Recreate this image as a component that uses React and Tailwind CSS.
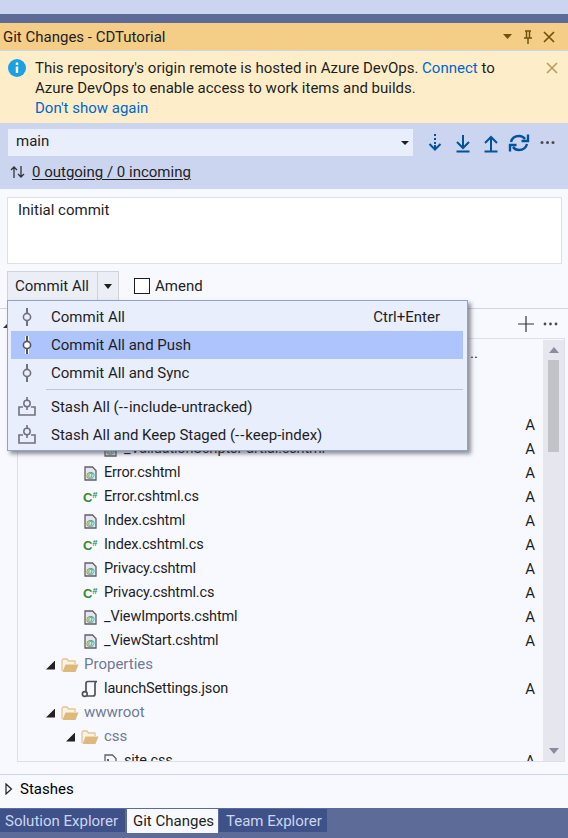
const blue = '#00539c';

function CommitIcon({ active }) {
  return (
    <svg width="16" height="20" viewBox="0 0 16 20" className="shrink-0">
      {active && <path d="M8 1v18" stroke="#fff" strokeWidth="4" />}
      <path d="M8 1v5M8 14v5" stroke={active ? '#55555f' : '#71717c'} strokeWidth="2" />
      <circle cx="8" cy="10" r="3.6" fill={active ? '#fff' : 'none'} stroke={active ? '#55555f' : '#71717c'} strokeWidth="1.6" />
    </svg>
  );
}

function StashIcon() {
  return (
    <svg width="18" height="20" viewBox="0 0 18 20" className="shrink-0">
      <path d="M9 0v3M9 10v3" stroke="#71717c" strokeWidth="1.6" />
      <circle cx="9" cy="6.500" r="3.2" fill="none" stroke="#71717c" strokeWidth="1.5" />
      <path d="M5 10H1v8h16v-8h-4" fill="none" stroke="#71717c" strokeWidth="1.6" />
    </svg>
  );
}

function RazorIcon() {
  return (
    <svg width="13" height="15" viewBox="0 0 13 15" className="shrink-0">
      <path d="M1 1h7.5L12 4.5V14H1z" fill="#e4e6ee" stroke="#5d5f69" strokeWidth="1.3" />
      <text x="6.5" y="11.5" textAnchor="middle" fontSize="9" fontWeight="700" fill="#3f9a62" fontFamily="Liberation Sans, sans-serif">@</text>
    </svg>
  );
}

function CssIcon() {
  return (
    <svg width="13" height="15" viewBox="0 0 13 15" className="shrink-0">
      <path d="M1 1h7.5L12 4.5V14H1z" fill="#f6f6fa" stroke="#5d5f69" strokeWidth="1.3" />
      <path d="M3 5h2v2H3zM3 9h2v2H3z" fill="#5d5f69" />
      <path d="M8 7h3v2H8z" fill="#c4384a" />
    </svg>
  );
}

function CsIcon() {
  return (
    <span className="flex w-[15px] shrink-0 items-start text-[13px] leading-none font-bold text-[#388a34] font-['Liberation_Sans',sans-serif]">
      C<span className="text-[9px] leading-[9px]">#</span>
    </span>
  );
}

function FolderIcon() {
  return (
    <svg width="18" height="15" viewBox="0 0 18 15" className="shrink-0">
      <path d="M1 13V2.5L2 1h4l1.500 2H14v3" fill="#f8f3e6" stroke="#e4c794" strokeWidth="1.3" />
      <path d="M1.500 14l3-7.500H17.500L14.500 14z" fill="#dfb87c" />
    </svg>
  );
}

function ScrollIcon() {
  return (
    <svg width="18" height="18" viewBox="0 0 18 18" className="shrink-0">
      <path d="M5 13V3.500Q5 1.500 7 1.500h9Q14 1.500 14 4v10q0 2-2 2H6" fill="none" stroke="#4f515c" strokeWidth="1.7" />
      <circle cx="3.800" cy="14" r="2.400" fill="#f8f9ff" stroke="#4f515c" strokeWidth="1.600" />
    </svg>
  );
}

function Expander() {
  return <span className="block h-[9px] w-[9px] shrink-0 bg-[#222] [clip-path:polygon(100%_0,100%_100%,0_100%)]" />;
}

const rows = [
  { indent: 0, dots: true },
  { indent: 0 },
  { indent: 0 },
  { indent: 0, status: 'A' },
  { indent: 86, name: '_ValidationScriptsPartial.cshtml', icon: <RazorIcon />, status: 'A' },
  { indent: 66, name: 'Error.cshtml', icon: <RazorIcon />, status: 'A' },
  { indent: 65, name: 'Error.cshtml.cs', icon: <CsIcon />, status: 'A', cell: 'w-[21px]' },
  { indent: 66, name: 'Index.cshtml', icon: <RazorIcon />, status: 'A' },
  { indent: 65, name: 'Index.cshtml.cs', icon: <CsIcon />, status: 'A', cell: 'w-[21px]' },
  { indent: 66, name: 'Privacy.cshtml', icon: <RazorIcon />, status: 'A' },
  { indent: 65, name: 'Privacy.cshtml.cs', icon: <CsIcon />, status: 'A', cell: 'w-[21px]' },
  { indent: 66, name: '_ViewImports.cshtml', icon: <RazorIcon />, status: 'A' },
  { indent: 66, name: '_ViewStart.cshtml', icon: <RazorIcon />, status: 'A' },
  { indent: 28, name: 'Properties', folder: true },
  { indent: 63, name: 'launchSettings.json', icon: <ScrollIcon />, status: 'A', cell: 'w-[23px]' },
  { indent: 28, name: 'wwwroot', folder: true },
  { indent: 48, name: 'css', folder: true },
  { indent: 86, name: 'site.css', icon: <CssIcon />, status: 'A' },
];

function TreeRow({ row }) {
  return (
    <div className="flex h-6 shrink-0 items-center pr-[8px]" style={{ paddingLeft: row.indent }}>
      {row.folder && <span className="mr-[6px]"><Expander /></span>}
      {row.folder && <FolderIcon />}
      {row.icon && <span className={`flex shrink-0 ${row.cell || 'w-[20px]'}`}>{row.icon}</span>}
      {row.name && (
        <span className={`${row.folder ? 'ml-[5px] pb-[2px] text-[#717a96]' : 'text-[14.5px] tracking-[-0.15px] text-[#1e1e1e]'}`}>{row.name}</span>
      )}
      {row.dots && <span className="ml-[452px] text-[#1e1e1e]">..</span>}
      {row.status && <span className="ml-auto text-[#1e1e1e]">{row.status}</span>}
    </div>
  );
}

function MenuItem({ label, shortcut, active, stash }) {
  return (
    <div className={`flex h-[28px] items-center pl-[7px] pr-[23px] ${active ? 'bg-[#aec4fd]' : ''}`}>
      <span className="flex w-[33px] shrink-0 justify-center pr-[17px] pl-[1px]">
        {stash ? <StashIcon /> : <CommitIcon active={active} />}
      </span>
      <span>{label}</span>
      {shortcut && <span className="ml-auto">{shortcut}</span>}
    </div>
  );
}

function CommitMenu() {
  return (
    <div className="absolute top-[300px] left-[7px] z-10 w-[461px] h-[151px] border border-[#8fa3c9] bg-[#e9eefd] pl-[3px] pr-[4px] pt-[2px] text-[#1e1e1e] shadow-[3px_3px_4px_rgba(60,60,70,0.55)]">
      <MenuItem label="Commit All" shortcut="Ctrl+Enter" />
      <MenuItem label="Commit All and Push" active />
      <MenuItem label="Commit All and Sync" />
      <div className="mt-[2px] mb-[3px] ml-[35px] border-t border-[#bcc6e0]" />
      <MenuItem label={<>Stash All (<span className="tracking-[1px]">--</span>include-untracked)</>} stash />
      <MenuItem label={<>Stash All and Keep Staged (<span className="tracking-[1px]">--</span>keep-index)</>} stash />
    </div>
  );
}

export default function App() {
  return (
    <div className="relative flex h-[838px] w-[568px] flex-col overflow-hidden bg-[#ccd5f0] text-[15px] leading-5 text-[#1e1e1e] [font-variant-ligatures:none] font-['Roboto',sans-serif]">
      <div className="mt-[14px] h-[9px] shrink-0 bg-[#5d6b99]" />

      {/* Title bar */}
      <div className="flex h-[27px] shrink-0 items-center bg-[#f4cd87] pl-[3px] pr-[6px]">
        <span>Git Changes - CDTutorial</span>
        <svg width="60" height="16" viewBox="0 0 60 16" className="ml-auto">
          <path d="M1 5h9l-4.500 5z" fill="#6f5310" />
          <path d="M23 2h6M24.500 2v7M27.500 2v7M22 9h8M26 9v6" stroke="#6f5310" strokeWidth="1.500" fill="none" />
          <path d="M42 3l10 10M52 3L42 13" stroke="#6f5310" strokeWidth="1.700" />
        </svg>
      </div>

      {/* Info bar */}
      <div className="mt-px flex h-[72px] shrink-0 bg-[#fdeec9] pt-[7px] pl-[8px] pr-[10px]">
        <svg width="18" height="18" viewBox="0 0 18 18" className="mt-[1px] shrink-0">
          <circle cx="9" cy="9" r="9" fill="#1ba1e2" />
          <path d="M7.800 7.500h2.400V14H7.800zM7.800 3.500h2.400v2.400H7.800z" fill="#fff" />
        </svg>
        <div className="ml-[9px] w-[480px]">
          <div>
            This repository's origin remote is hosted in Azure DevOps. <span className="text-[#0066cc]">Connect</span> to
          </div>
          <div>Azure DevOps to enable access to work items and builds.</div>
          <div className="text-[#0066cc]">Don't show again</div>
        </div>
        <svg width="12" height="12" viewBox="0 0 12 12" className="mt-[4px] ml-auto shrink-0">
          <path d="M1 1l10 10M11 1L1 11" stroke="#bb9f60" strokeWidth="1.700" />
        </svg>
      </div>

      {/* Branch + sync */}
      <div className="h-[66px] shrink-0 pt-[6px]">
        <div className="flex items-center">
          <div className="ml-[8px] flex h-[27px] w-[405px] items-center bg-[#e9eefd] pl-[8px] pr-[4px]">
            <span className="pb-[3px]">main</span>
            <span className="ml-auto h-0 w-0 border-x-[4px] border-t-[4px] border-x-transparent border-t-[#1e1e1e]" />
          </div>
          <svg width="130" height="20" viewBox="0 0 130 20" className="ml-[15px]">
            <g stroke={blue} strokeWidth="2" fill="none">
              <path d="M7 1v2M7 5v2M7 9v2M7 12v4M1.500 11L7 16.500 12.500 11" />
              <path d="M35 2v13M29 9l6 6 6-6M28.500 18.500h13" />
              <path d="M63 18V5M57 10l6-6 6 6M56.500 18.500h13" strokeWidth="2" />
              <path d="M83 9q1.500-6 8-6 4 0 6 3M100 1.500V8h-6.500M99 11q-1.500 6-8 6-4 0-6-3M82 18.500V12h6.500" strokeWidth="2.400" />
            </g>
            <g fill="#4a4a55">
              <circle cx="114" cy="9.500" r="1.500" />
              <circle cx="119.500" cy="9.500" r="1.500" />
              <circle cx="125" cy="9.500" r="1.500" />
            </g>
          </svg>
        </div>
        <div className="mt-[6px] flex h-[20px] items-center pl-[10px]">
          <svg width="15" height="14" viewBox="0 0 15 14">
            <path d="M4 13V2M1 5l3-3 3 3M11 1v11M8 9l3 3 3-3" stroke="#33333a" strokeWidth="1.300" fill="none" />
          </svg>
          <span className="ml-[7px] underline underline-offset-2">0 outgoing / 0 incoming</span>
        </div>
      </div>

      {/* Panel body */}
      <div className="flex min-h-0 flex-1 flex-col bg-[#f8f9ff]">
        <div className="mx-[7px] mt-[8px] mr-[6px] h-[67px] shrink-0 border border-[#dcdfea] bg-white px-[10px] py-[2px]">
          Initial commit
        </div>

        <div className="mt-[7px] flex h-[30px] shrink-0 items-center pl-[7px]">
          <div className="flex h-[30px] w-[91px] items-center border border-[#d0d3df] bg-[#eceef6] pl-[7px]">Commit All</div>
          <div className="flex h-[30px] w-[21px] items-center justify-center border-y border-r border-[#d0d3df] bg-[#eceef6]">
            <span className="h-0 w-0 border-x-[4px] border-t-[5px] border-x-transparent border-t-[#1e1e1e]" />
          </div>
          <span className="ml-[15px] h-[16px] w-[16px] border border-[#1e1e1e] bg-white" />
          <span className="ml-[5px]">Amend</span>
        </div>

        <div className="mt-[7px] flex h-[30px] shrink-0 items-center justify-end border-t border-[#ccd5f0] pr-[8px]">
          <svg width="42" height="18" viewBox="0 0 42 18">
            <path d="M8 1v16M0 9h16" stroke="#33333a" strokeWidth="1.200" />
            <g fill="#4a4a55">
              <circle cx="27" cy="9" r="1.400" />
              <circle cx="32.500" cy="9" r="1.400" />
              <circle cx="38" cy="9" r="1.400" />
            </g>
          </svg>
        </div>

        {/* Changes tree */}
        <div className="ml-[17px] mr-[3px] flex h-[424px] shrink-0 overflow-hidden border border-[#dcdfea]">
          <div className="flex min-w-0 flex-1 flex-col overflow-hidden pt-[2px]">
            {rows.map((row, i) => <TreeRow key={i} row={row} />)}
          </div>
          <div className="mt-px flex w-[21px] shrink-0 flex-col items-center bg-[#e6e7ee]">
            <span className="mt-[7px] h-0 w-0 border-x-[5px] border-b-[6px] border-x-transparent border-b-[#8a8ca0]" />
            <span className="mt-[7px] h-[92px] w-[11px] bg-[#c2c3c9]" />
            <span className="mt-auto mb-[7px] h-0 w-0 border-x-[5px] border-t-[6px] border-x-transparent border-t-[#8a8ca0]" />
          </div>
        </div>

        <div className="mt-[12px] flex h-[34px] shrink-0 items-center border-t border-[#ccd5f0] pb-[6px] pl-[5px] text-black">
          <svg width="8" height="12" viewBox="0 0 8 12">
            <path d="M1 1l5.500 5L1 11z" fill="none" stroke="#222" strokeWidth="1.200" />
          </svg>
          <span className="ml-[7px]">Stashes</span>
        </div>
      </div>

      {/* Bottom tabs */}
      <div className="flex h-[30px] shrink-0 items-start bg-[#5d6b99]">
        <div className="mt-px flex h-[23px] w-[125px] items-center bg-[#3f5189] pl-[5px] text-[#ccd5f0]">Solution Explorer</div>
        <div className="mt-px ml-[2px] flex h-[24px] w-[91px] items-center bg-[#f8f9ff] pl-[6px] text-[#1e1e1e]">Git Changes</div>
        <div className="mt-px ml-[1px] flex h-[23px] w-[108px] items-center bg-[#3f5189] pl-[7px] text-[#ccd5f0]">Team Explorer</div>
      </div>

      <span className="absolute top-[323px] left-[3px] h-[5px] w-[5px] bg-[#333] [clip-path:polygon(100%_0,100%_100%,0_100%)]" />
      <CommitMenu />
    </div>
  );
}
